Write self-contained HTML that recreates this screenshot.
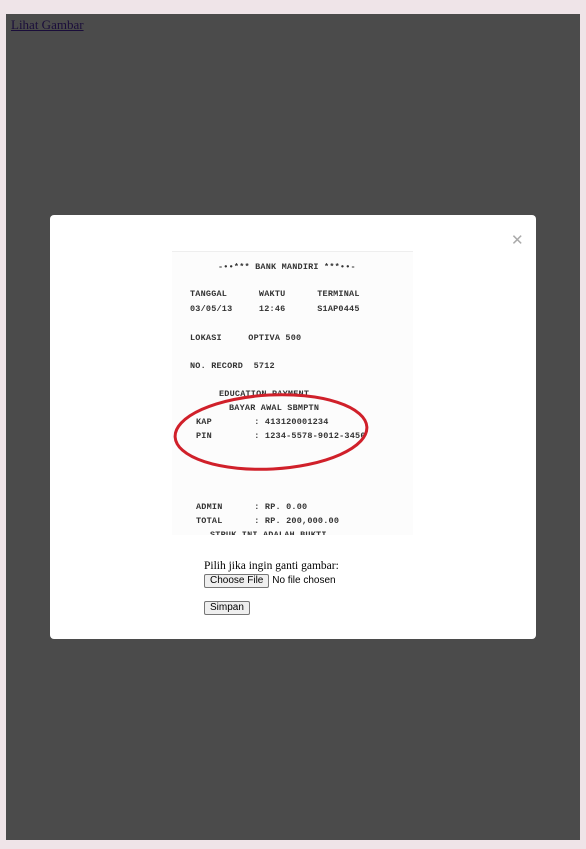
<!DOCTYPE html>
<html><head><style>
*{margin:0;padding:0;box-sizing:border-box}
html,body{width:586px;height:849px;background:#efe4e8;overflow:hidden}
.dark{position:absolute;left:6px;top:14px;width:574px;height:826px;background:#4b4b4b}
.link{position:absolute;left:11px;top:17px;font:13px "Liberation Serif",serif;color:#1a0d3a;text-decoration:underline}
.modal{position:absolute;left:50px;top:215px;width:486px;height:424px;background:#fff;border-radius:4px}
.x{position:absolute;left:511px;top:231px;font:15px "Liberation Sans",sans-serif;color:#aaa}
.rc{position:absolute;left:172px;top:251px;width:241px;height:284px;background:#fcfcfc;border-top:1px solid #eee;font:bold 8.5px "Liberation Mono",monospace;color:#333;overflow:hidden;letter-spacing:0.2px}
.rc div{position:absolute;white-space:pre}
.form{position:absolute;left:204px;top:559px;font:11.5px "Liberation Serif",serif;color:#000;line-height:14px}
.btn{display:inline-block;border:1px solid #767676;background:#efefef;border-radius:2px;font:10px "Liberation Sans",sans-serif;padding:0 5px;line-height:12px;color:#000}
.nf{font:10px "Liberation Sans",sans-serif}
</style></head><body>
<div class="dark"></div>
<a class="link">Lihat Gambar</a>
<div class="modal"></div>
<div class="x">✕</div>
<div class="rc">
<div style="left:46px;top:10px">-••*** BANK MANDIRI ***••-</div>
<div style="left:18px;top:37px">TANGGAL      WAKTU      TERMINAL</div>
<div style="left:18px;top:52px">03/05/13     12:46      S1AP0445</div>
<div style="left:18px;top:81px">LOKASI     OPTIVA 500</div>
<div style="left:18px;top:109px">NO. RECORD  5712</div>
<div style="left:47px;top:137px">EDUCATION PAYMENT</div>
<div style="left:57px;top:151px">BAYAR AWAL SBMPTN</div>
<div style="left:24px;top:165px">KAP        : 413120001234</div>
<div style="left:24px;top:179px">PIN        : 1234-5578-9012-3456</div>
<div style="left:24px;top:250px">ADMIN      : RP. 0.00</div>
<div style="left:24px;top:264px">TOTAL      : RP. 200,000.00</div>
<div style="left:38px;top:278px">STRUK INI ADALAH BUKTI</div>
<svg style="position:absolute;left:0;top:0" width="241" height="284"><ellipse cx="99" cy="180" rx="96" ry="37" fill="none" stroke="#d0202a" stroke-width="3" transform="rotate(-3 99 180)"/></svg>
</div>
<div class="form">Pilih jika ingin ganti gambar:<br>
<span class="btn">Choose File</span> <span class="nf">No file chosen</span><br>
<div style="height:12px"></div>
<span class="btn">Simpan</span></div>
</body></html>
